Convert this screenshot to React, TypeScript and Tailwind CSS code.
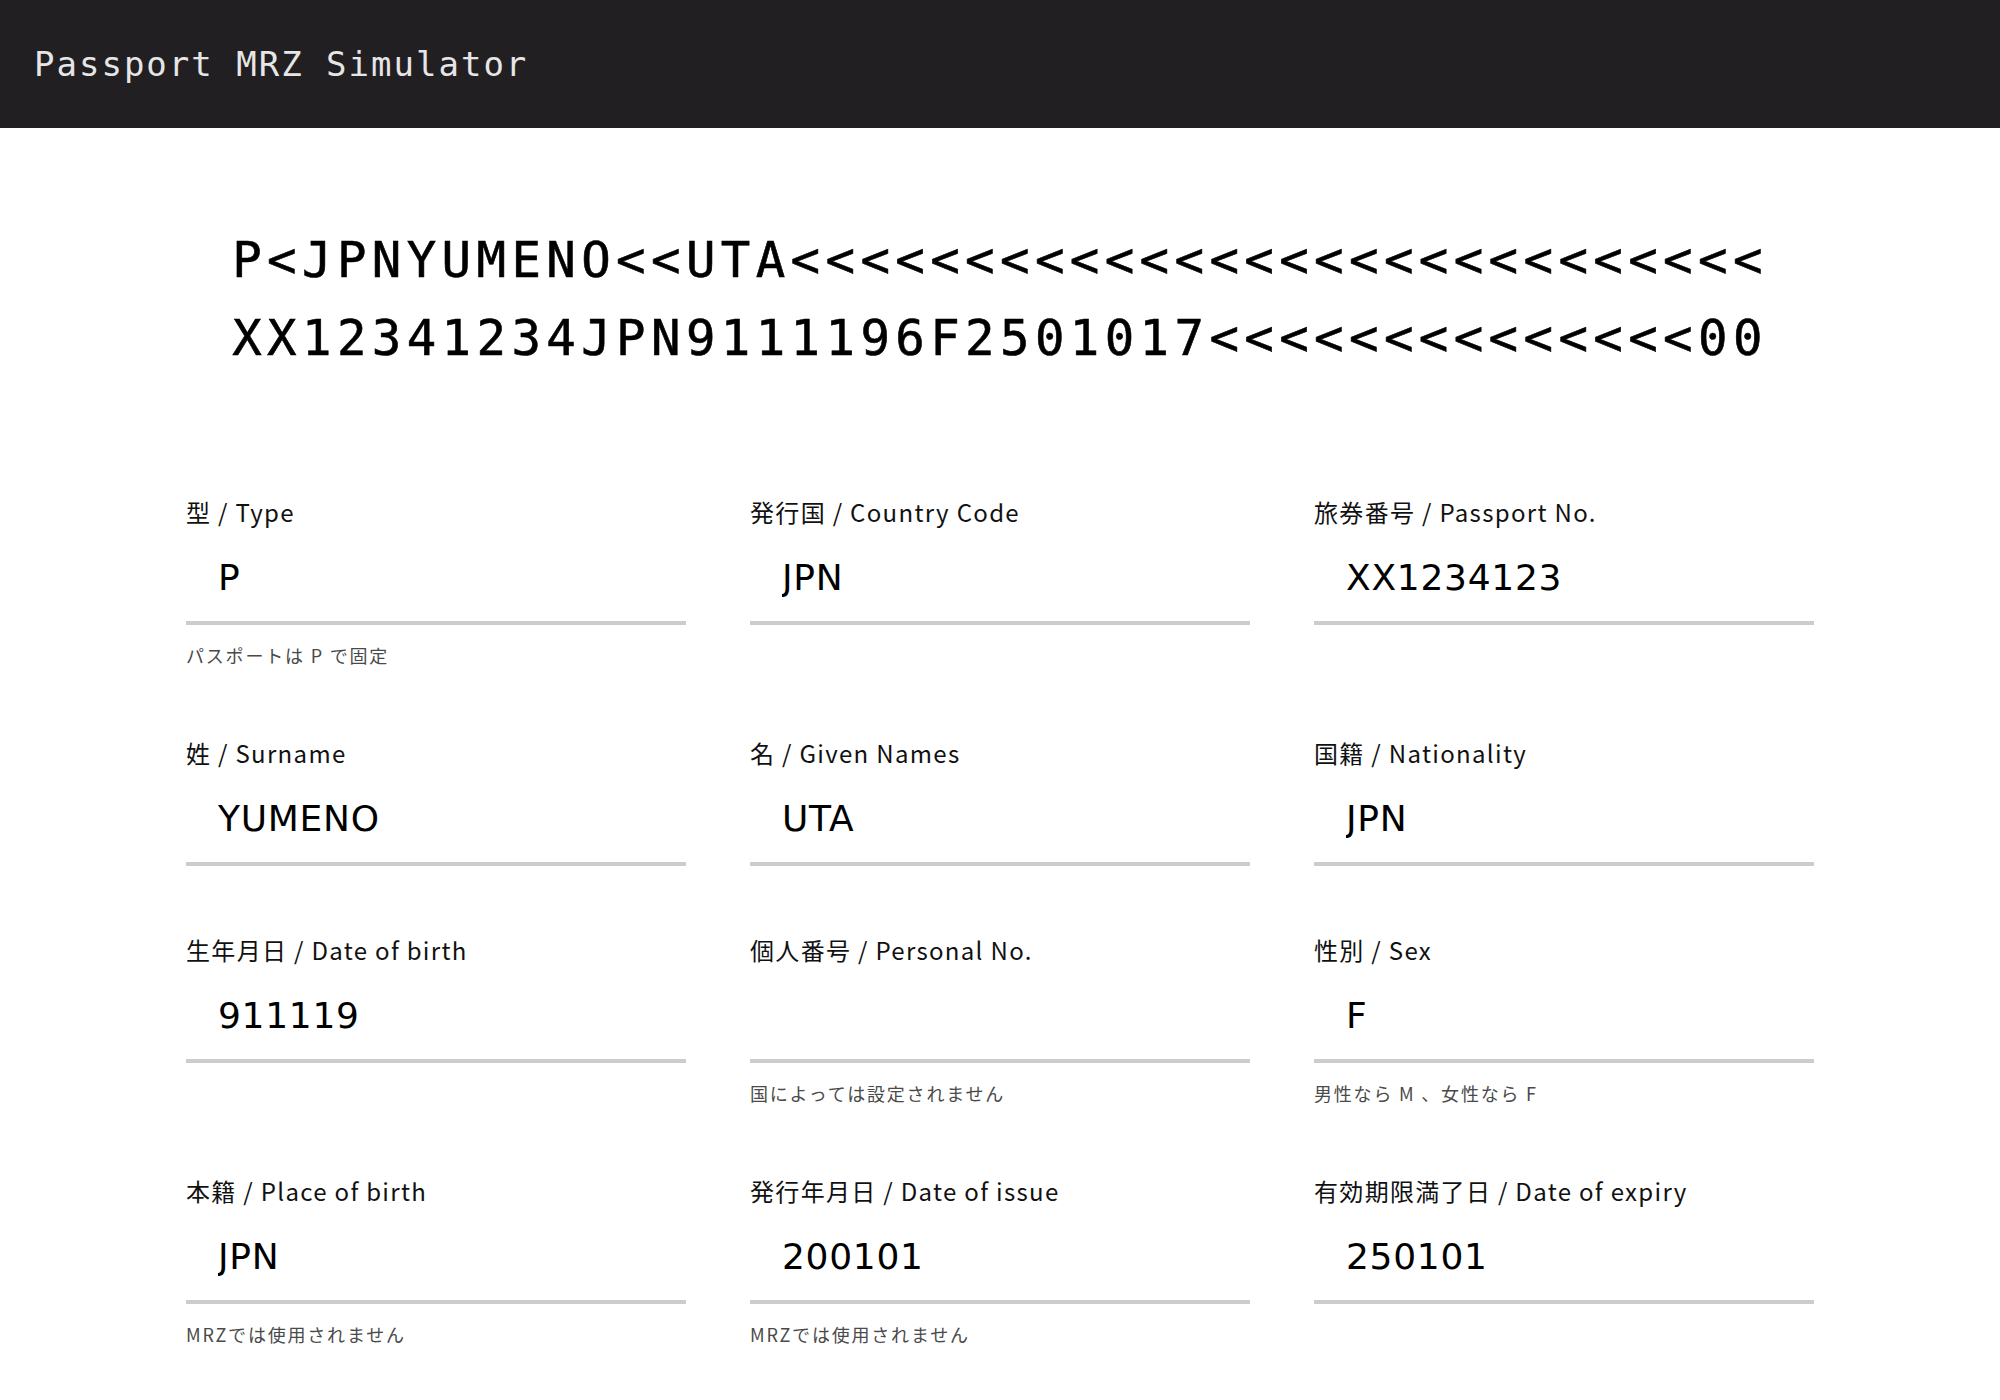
import React from "react";

type Field = {
  label: string;
  value: string;
  hint?: string;
};

const fields: Field[] = [
  { label: "型 / Type", value: "P", hint: "パスポートは P で固定" },
  { label: "発行国 / Country Code", value: "JPN" },
  { label: "旅券番号 / Passport No.", value: "XX1234123" },
  { label: "姓 / Surname", value: "YUMENO" },
  { label: "名 / Given Names", value: "UTA" },
  { label: "国籍 / Nationality", value: "JPN" },
  { label: "生年月日 / Date of birth", value: "911119" },
  { label: "個人番号 / Personal No.", value: "", hint: "国によっては設定されません" },
  { label: "性別 / Sex", value: "F", hint: "男性なら M 、女性なら F" },
  { label: "本籍 / Place of birth", value: "JPN", hint: "MRZでは使用されません" },
  { label: "発行年月日 / Date of issue", value: "200101", hint: "MRZでは使用されません" },
  { label: "有効期限満了日 / Date of expiry", value: "250101" },
];

const mrz = [
  "P<JPNYUMENO<<UTA<<<<<<<<<<<<<<<<<<<<<<<<<<<<",
  "XX12341234JPN9111196F2501017<<<<<<<<<<<<<<00",
];

const FieldBox: React.FC<{ field: Field }> = ({ field }) => {
  return (
    <label className="flex flex-col">
      {/* Label */}
      <span className="font-['Noto_Sans_CJK_JP',sans-serif] text-[24px] leading-[32px] tracking-[0.055em] text-[#111]">
        {field.label}
      </span>
      {/* Input */}
      <input
        className="h-[97px] w-full pt-[6px] pl-[32px] border-b-4 border-[#cccccc] bg-transparent outline-none font-['DejaVu_Sans',sans-serif] text-[36px] tracking-[0.02em] text-black"
        type="text"
        defaultValue={field.value}
      />
      {field.hint && (
        <span className="mt-[17px] font-['Noto_Sans_CJK_JP',sans-serif] text-[18px] leading-[27px] tracking-[0.1em] text-[#4a4a4a]">
          {field.hint}
        </span>
      )}
    </label>
  );
};

const App: React.FC = () => {
  return (
    <div className="min-h-screen bg-white">
      {/* Header */}
      <header className="h-[128px] bg-[#221f22] flex items-center pl-[34px]">
        <h1 className="font-['DejaVu_Sans_Mono',monospace] text-[34px] tracking-[2px] text-[#e6e6e6]">
          Passport MRZ Simulator
        </h1>
      </header>

      {/* MRZ */}
      <div className="mt-[94px] flex flex-col items-center font-['DejaVu_Sans_Mono',monospace] text-[49px] leading-[78px] tracking-[5.4px] text-black [-webkit-text-stroke:0.6px_black]">
        {mrz.map((line) => (
          <div key={line} className="whitespace-pre">
            {line}
          </div>
        ))}
      </div>

      {/* Form */}
      <div className="mx-auto mt-[118px] w-[1628px] grid grid-cols-3 gap-x-[64px] gap-y-[68px] pb-[60px]">
        {fields.map((f) => (
          <FieldBox key={f.label} field={f} />
        ))}
      </div>
    </div>
  );
};

export default App;
